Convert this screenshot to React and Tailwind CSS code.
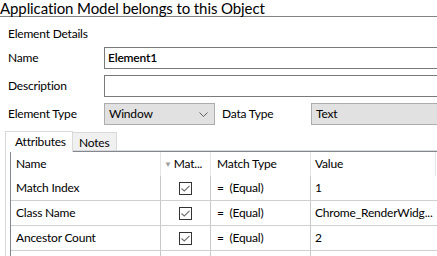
import React from "react";

const rows = [
  { name: "Match Index", value: "1" },
  { name: "Class Name", value: "Chrome_RenderWidg..." },
  { name: "Ancestor Count", value: "2" },
  { name: "", value: "" },
];

const Chevron = () => (
  <svg width="9" height="5" viewBox="0 0 9 5" fill="none">
    <path d="M0.5 0.5L4.5 4.5L8.5 0.5" stroke="#606060" strokeWidth="1" />
  </svg>
);

const Check = () => (
  <span className="w-[13px] h-[13px] border border-[#333] bg-white flex items-center justify-center">
    <svg width="9" height="7" viewBox="0 0 9 7" fill="none">
      <path d="M0.5 3.5L3.3 6L8.5 0.8" stroke="#707070" strokeWidth="1.1" />
    </svg>
  </span>
);

const Field = ({ label, children }) => (
  <div className="flex items-center h-[22px]">
    <div className="w-[96px] shrink-0">{label}</div>
    {children}
  </div>
);

export default function App() {
  return (
    <div
      className="w-[437px] h-[256px] overflow-hidden bg-white text-black text-[12px] tracking-[-0.2px]"
      style={{ fontFamily: "Lato, 'Noto Sans', sans-serif" }}
    >
      <div className="h-[17px] border-b border-[#838383]">
        <div className="text-[15px] leading-[16px] whitespace-nowrap tracking-[-0.1px]">
          Application Model belongs to this Object
        </div>
      </div>

      <div className="pl-[8px]">
        <div className="h-[16px] mt-[9px] leading-[16px]">Element Details</div>

        <div className="mt-[5px] flex flex-col gap-[6px]">
          <Field label="Name">
            <div className="w-[400px] shrink-0 h-[22px] border border-[#7a7a7a] px-[3px] flex items-center font-semibold">
              Element1
            </div>
          </Field>
          <Field label="Description">
            <div className="w-[400px] shrink-0 h-[22px] border border-[#7a7a7a]" />
          </Field>
          <div className="flex items-center h-[22px]">
            <div className="w-[96px] shrink-0">Element Type</div>
            <div className="w-[111px] shrink-0 h-[22px] border border-[#adadad] bg-[#e1e1e1] pl-[4px] pr-[6px] flex items-center justify-between">
              <span>Window</span>
              <Chevron />
            </div>
            <div className="w-[96px] pl-[7px] shrink-0">Data Type</div>
            <div className="w-[200px] shrink-0 h-[22px] border border-[#adadad] bg-[#e1e1e1] pl-[4px] flex items-center">
              Text
            </div>
          </div>
        </div>
      </div>

      <div className="pl-[5px] mt-[5px]">
        <div className="flex items-end h-[21px]">
          <div className="w-[68px] shrink-0 h-[21px] border border-b-0 border-[#d9d9d9] bg-white pl-[9px] pt-[1px] relative z-10 translate-y-[1px]">
            Attributes
          </div>
          <div className="w-[44px] shrink-0 h-[19px] border border-l-0 border-[#d9d9d9] bg-[#f0f0f0] pl-[6px] pt-[1px]">
            Notes
          </div>
          <div className="flex-1 border-b border-[#d9d9d9]" />
        </div>

        <div className="border-l border-[#d9d9d9] pl-[4px]">
          <div className="border-l border-t border-[#828790]">
            <div className="flex h-[24px] items-center">
              <div className="w-[150px] shrink-0 pl-[5px] border-r border-[#e5e5e5] h-full flex items-center">Name</div>
              <div className="w-[50px] shrink-0 border-r border-[#e5e5e5] h-full flex items-center pl-[3px] gap-[2px]">
                <span className="text-[8px] text-[#a0a0a0]">▼</span>
                <span>Mat...</span>
              </div>
              <div className="w-[100px] shrink-0 border-r border-[#e5e5e5] h-full flex items-center pl-[6px]">Match Type</div>
              <div className="w-[125px] shrink-0 border-r border-[#e5e5e5] h-full flex items-center pl-[4px]">Value</div>
            </div>
            {rows.map((r, i) => (
              <div key={i} className="flex h-[25px] border-b border-[#d0d0d0]">
                <div className="w-[150px] shrink-0 pl-[5px] border-r border-[#c8c8c8] flex items-center">{r.name}</div>
                <div className="w-[50px] shrink-0 border-r border-[#c8c8c8] flex items-center justify-center">
                  <Check />
                </div>
                <div className="w-[100px] shrink-0 border-r border-[#c8c8c8] flex items-center pl-[6px] whitespace-pre">
                  {r.name ? "=  (Equal)" : ""}
                </div>
                <div className="w-[125px] shrink-0 flex items-center pl-[4px] whitespace-nowrap">{r.value}</div>
              </div>
            ))}
          </div>
        </div>
      </div>
    </div>
  );
}
